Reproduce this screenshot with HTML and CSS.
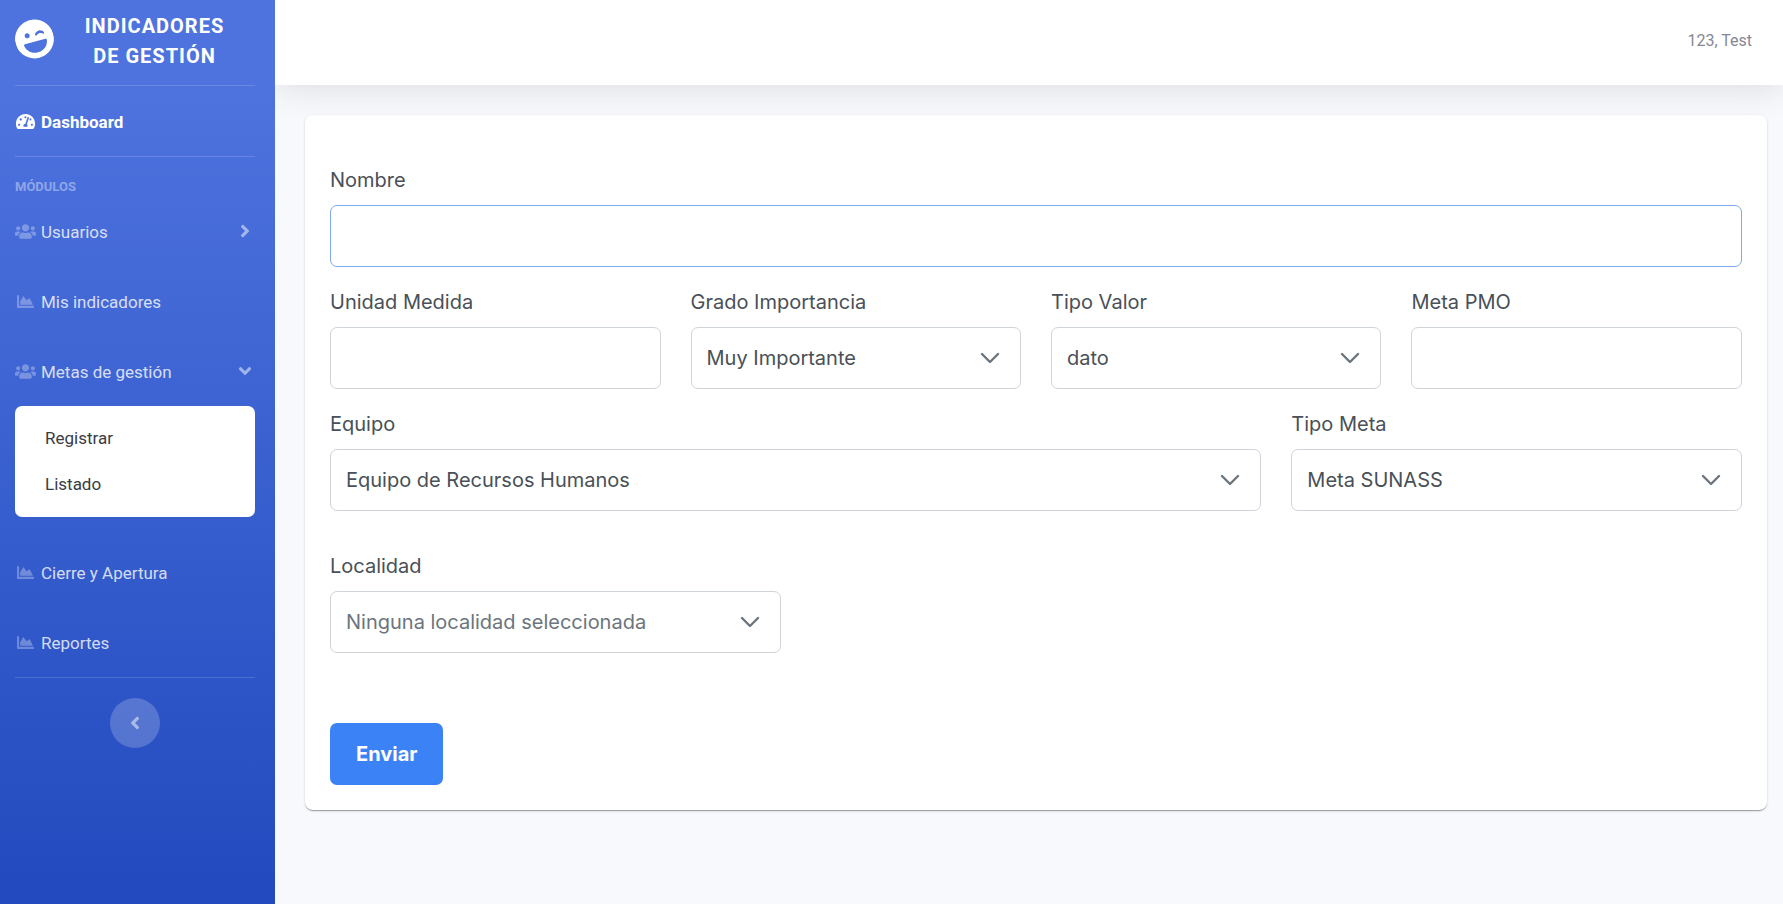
FILE: index.html
```html
<!DOCTYPE html>
<html lang="es">
<head>
<meta charset="utf-8">
<meta name="viewport" content="width=device-width, initial-scale=1">
<title>Indicadores de Gestión</title>
<link rel="stylesheet" href="styles.css">
</head>
<body>
<svg class="sprite" aria-hidden="true">
  <symbol id="laugh-wink" viewBox="0 0 496 512"><path d="M248 8C111 8 0 119 0 256s111 248 248 248 248-111 248-248S385 8 248 8zm20.1 198.1c4-25.2 34.2-42.1 59.9-42.1s55.9 16.9 59.9 42.1c1.7 11.1-11.4 18.3-19.8 10.8l-9.5-8.5c-14.8-13.2-46.2-13.2-61 0L288 217c-8.4 7.4-21.6.3-19.9-10.9zM168 160c17.7 0 32 14.3 32 32s-14.3 32-32 32-32-14.3-32-32 14.3-32 32-32zm230.9 145.9C390 377 329.4 432 256 432h-16c-73.4 0-134-55-142.9-126.1-1.2-9.5 6.3-17.9 15.9-17.9h270c9.6 0 17.1 8.4 15.9 17.9z"/></symbol>
  <symbol id="tachometer" viewBox="0 0 576 512"><path d="M288 32C128.94 32 0 160.94 0 320c0 52.8 14.25 102.26 39.06 144.8 5.61 9.62 16.3 15.2 27.44 15.2h443c11.14 0 21.83-5.58 27.44-15.2C561.75 422.26 576 372.8 576 320c0-159.06-128.94-288-288-288zm0 64c14.71 0 26.58 10.13 30.32 23.65-1.11 2.26-2.64 4.23-3.45 6.67l-9.22 27.67c-5.13 3.49-10.97 6.01-17.64 6.01-17.67 0-32-14.33-32-32S270.33 96 288 96zM96 384c-17.67 0-32-14.33-32-32s14.33-32 32-32 32 14.33 32 32-14.33 32-32 32zm48-160c-17.67 0-32-14.33-32-32s14.33-32 32-32 32 14.33 32 32-14.33 32-32 32zm246.77-72.41l-61.33 184C343.13 347.33 352 364.54 352 384c0 11.72-3.38 22.55-8.88 32H232.88c-5.5-9.45-8.88-20.28-8.88-32 0-33.94 26.5-61.43 59.9-63.59l61.34-184.01c4.17-12.56 17.73-19.45 30.36-15.17 12.57 4.19 19.35 17.79 15.17 30.36zm14.66 57.2l15.52-46.55c3.47-1.29 7.13-2.23 11.05-2.23 17.67 0 32 14.33 32 32s-14.33 32-32 32c-11.38-.01-20.89-6.28-26.57-15.22zM480 384c-17.67 0-32-14.33-32-32s14.33-32 32-32 32 14.33 32 32-14.33 32-32 32z"/></symbol>
  <symbol id="users" viewBox="0 0 640 512"><path d="M96 224c35.3 0 64-28.7 64-64s-28.7-64-64-64-64 28.7-64 64 28.7 64 64 64zm448 0c35.3 0 64-28.7 64-64s-28.7-64-64-64-64 28.7-64 64 28.7 64 64 64zm32 32h-64c-17.6 0-33.5 7.1-45.1 18.6 40.3 22.1 68.9 62 75.1 109.4h66c17.7 0 32-14.3 32-32v-32c0-35.3-28.7-64-64-64zm-256 0c61.9 0 112-50.1 112-112S381.9 32 320 32 208 82.1 208 144s50.1 112 112 112zm76.8 32h-8.3c-20.8 10-43.9 16-68.5 16s-47.6-6-68.5-16h-8.3C179.6 288 128 339.6 128 403.2V432c0 26.5 21.5 48 48 48h288c26.5 0 48-21.5 48-48v-28.8c0-63.6-51.6-115.2-115.2-115.2zm-223.7-13.4C161.5 263.1 145.6 256 128 256H64c-35.3 0-64 28.7-64 64v32c0 17.7 14.3 32 32 32h65.9c6.3-47.4 34.9-87.3 75.2-109.4z"/></symbol>
  <symbol id="chart-area" viewBox="0 0 512 512"><path d="M500 384c6.6 0 12 5.4 12 12v40c0 6.6-5.4 12-12 12H12c-6.6 0-12-5.4-12-12V76c0-6.6 5.4-12 12-12h40c6.6 0 12 5.4 12 12v308h436zM372.7 159.5L288 216l-85.3-113.7c-5.1-6.8-15.5-6.3-19.9 1L96 248v104h384l-89.9-187.8c-3.2-6.5-11.4-8.7-17.4-4.7z"/></symbol>
  <symbol id="angle-right" viewBox="0 0 256 512"><path d="M224.3 273l-136 136c-9.4 9.4-24.6 9.4-33.9 0l-22.6-22.6c-9.4-9.4-9.4-24.6 0-33.9l96.4-96.4-96.4-96.4c-9.4-9.4-9.4-24.6 0-33.9L54.3 103c9.4-9.4 24.6-9.4 33.9 0l136 136c9.5 9.4 9.5 24.6.1 34z"/></symbol>
  <symbol id="angle-left" viewBox="0 0 256 512"><path d="M31.7 239l136-136c9.4-9.4 24.6-9.4 33.9 0l22.6 22.6c9.4 9.4 9.4 24.6 0 33.9L127.9 256l96.4 96.4c9.4 9.4 9.4 24.6 0 33.9L201.7 409c-9.4 9.4-24.6 9.4-33.9 0l-136-136c-9.5-9.4-9.5-24.6-.1-34z"/></symbol>
  <symbol id="angle-down" viewBox="0 0 320 512"><path d="M143 352.3L7 216.3c-9.4-9.4-9.4-24.6 0-33.9l22.6-22.6c9.4-9.4 24.6-9.4 33.9 0l96.4 96.4 96.4-96.4c9.4-9.4 24.6-9.4 33.9 0l22.6 22.6c9.4 9.4 9.4 24.6 0 33.9l-136 136c-9.2 9.4-24.4 9.4-33.8 0z"/></symbol>
  <symbol id="chevron-down" viewBox="0 0 20 20"><path d="M2 6l8 8 8-8" fill="none" stroke="currentColor" stroke-width="2.4" stroke-linecap="round" stroke-linejoin="round"/></symbol>
</svg>

<div class="app">
  <aside class="sidebar">
    <a class="brand" href="#">
      <svg class="brand-icon" aria-hidden="true"><use href="#laugh-wink"/></svg>
      <span class="brand-text">Indicadores de Gestión</span>
    </a>
    <nav class="nav">
      <a class="nav-link active" href="#"><svg class="nav-icon" aria-hidden="true"><use href="#tachometer"/></svg><span class="nav-text">Dashboard</span></a>
      <div class="nav-heading">Módulos</div>
      <a class="nav-link" href="#"><svg class="nav-icon" aria-hidden="true"><use href="#users"/></svg><span class="nav-text">Usuarios</span><svg class="caret" aria-hidden="true"><use href="#angle-right"/></svg></a>
      <a class="nav-link" href="#"><svg class="nav-icon" aria-hidden="true"><use href="#chart-area"/></svg><span class="nav-text">Mis indicadores</span></a>
      <a class="nav-link" href="#"><svg class="nav-icon" aria-hidden="true"><use href="#users"/></svg><span class="nav-text">Metas de gestión</span><svg class="caret" aria-hidden="true"><use href="#angle-down"/></svg></a>
      <div class="submenu">
        <a class="submenu-link" href="#">Registrar</a>
        <a class="submenu-link" href="#">Listado</a>
      </div>
      <a class="nav-link" href="#"><svg class="nav-icon" aria-hidden="true"><use href="#chart-area"/></svg><span class="nav-text">Cierre y Apertura</span></a>
      <a class="nav-link" href="#"><svg class="nav-icon" aria-hidden="true"><use href="#chart-area"/></svg><span class="nav-text">Reportes</span></a>
    </nav>
    <button class="toggle" type="button" aria-label="Contraer menú"><svg class="toggle-icon" aria-hidden="true"><use href="#angle-left"/></svg></button>
  </aside>

  <div class="content">
    <header class="topbar"><a class="user" href="#">123, Test</a></header>
    <main class="main">
      <form class="card">
        <div class="grid">
          <div class="field span-12">
            <label for="nombre">Nombre</label>
            <input class="control focused" id="nombre" type="text">
          </div>
          <div class="field span-3">
            <label for="unidad">Unidad Medida</label>
            <input class="control" id="unidad" type="text">
          </div>
          <div class="field span-3">
            <label for="grado">Grado Importancia</label>
            <div class="select">
              <select class="control" id="grado"><option>Muy Importante</option></select>
              <svg class="chevron" aria-hidden="true"><use href="#chevron-down"/></svg>
            </div>
          </div>
          <div class="field span-3">
            <label for="valor">Tipo Valor</label>
            <div class="select">
              <select class="control" id="valor"><option>dato</option></select>
              <svg class="chevron" aria-hidden="true"><use href="#chevron-down"/></svg>
            </div>
          </div>
          <div class="field span-3">
            <label for="pmo">Meta PMO</label>
            <input class="control" id="pmo" type="text">
          </div>
          <div class="field span-8">
            <label for="equipo">Equipo</label>
            <div class="select">
              <select class="control" id="equipo"><option>Equipo de Recursos Humanos</option></select>
              <svg class="chevron" aria-hidden="true"><use href="#chevron-down"/></svg>
            </div>
          </div>
          <div class="field span-4">
            <label for="meta">Tipo Meta</label>
            <div class="select">
              <select class="control" id="meta"><option>Meta SUNASS</option></select>
              <svg class="chevron" aria-hidden="true"><use href="#chevron-down"/></svg>
            </div>
          </div>
        </div>
        <div class="grid grid-spaced">
          <div class="field span-4">
            <label for="localidad">Localidad</label>
            <div class="select">
              <select class="control placeholder" id="localidad"><option>Ninguna localidad seleccionada</option></select>
              <svg class="chevron" aria-hidden="true"><use href="#chevron-down"/></svg>
            </div>
          </div>
        </div>
        <button class="submit" type="submit">Enviar</button>
      </form>
    </main>
  </div>
</div>
</body>
</html>
```

FILE: styles.css
```css
*,
*::before,
*::after {
  box-sizing: border-box;
}

body {
  margin: 0;
  font-family: Roboto, "Liberation Sans", sans-serif;
  font-size: 20px;
  line-height: 30px;
  background: #f8f9fc;
}

a {
  text-decoration: none;
}

.sprite {
  display: none;
}

svg {
  fill: currentColor;
  flex: none;
}

.app {
  display: flex;
  min-height: 100vh;
}

/* Sidebar */
.sidebar {
  position: relative;
  z-index: 2;
  flex: none;
  display: flex;
  flex-direction: column;
  width: 275px;
  padding: 0 20px 0 15px;
  color: #fff;
  background: linear-gradient(180deg, #4e73df 10%, #224abe 100%);
}

.brand {
  display: flex;
  align-items: center;
  height: 86px;
  padding-bottom: 7px;
  border-bottom: 1px solid rgba(255, 255, 255, 0.15);
  color: #fff;
  font-weight: 700;
  letter-spacing: 1px;
  text-align: center;
  text-transform: uppercase;
}

.brand-icon {
  width: 39px;
  height: 40px;
  transform: rotate(-15deg);
}

.brand-text {
  flex: 1;
  padding: 3px 30px 0;
}

.nav {
  display: flex;
  flex-direction: column;
  border-bottom: 1px solid rgba(255, 255, 255, 0.15);
}

.nav-link {
  display: flex;
  align-items: center;
  gap: 5px;
  height: 70px;
  color: rgba(255, 255, 255, 0.8);
  font-size: 17px;
}

.nav-link.active {
  color: #fff;
  font-weight: 700;
}

.nav-text {
  padding-top: 2px;
}

.nav-icon {
  width: 21px;
  height: 17px;
  color: rgba(255, 255, 255, 0.3);
}

.active .nav-icon {
  color: #fff;
}

.caret {
  width: 20px;
  height: 20px;
  margin-left: auto;
  color: rgba(255, 255, 255, 0.5);
}

.nav-heading {
  height: 40px;
  padding-top: 15px;
  border-top: 1px solid rgba(255, 255, 255, 0.15);
  color: rgba(255, 255, 255, 0.4);
  font-size: 13px;
  font-weight: 700;
  line-height: 30px;
  text-transform: uppercase;
}

.submenu {
  display: flex;
  flex-direction: column;
  margin-bottom: 20px;
  padding: 9px 0 10px;
  border-radius: 7px;
  background: #fff;
}

.submenu-link {
  padding: 8px 30px;
  color: #3a3b45;
  font-size: 17px;
}

.toggle {
  display: grid;
  place-items: center;
  align-self: center;
  width: 50px;
  height: 50px;
  margin: 20px 0;
  padding: 0;
  border: 0;
  border-radius: 50%;
  color: rgba(255, 255, 255, 0.5);
  background: rgba(255, 255, 255, 0.2);
}

.toggle-icon {
  width: 20px;
  height: 20px;
}

/* Content */
.content {
  flex: 1;
  min-width: 0;
}

.topbar {
  position: relative;
  z-index: 1;
  display: flex;
  align-items: center;
  justify-content: flex-end;
  height: 85px;
  padding: 0 31px 4px;
  background: #fff;
  box-shadow: 0 3px 35px rgba(58, 59, 69, 0.15);
}

.user {
  color: #858796;
  font-size: 16px;
}

.main {
  padding: 30px 16px 30px 30px;
}

.card {
  padding: 50px 25px 25px;
  border-radius: 8px;
  background: #fff;
  box-shadow: 0 2px 1px -1px rgba(0, 0, 0, 0.2), 0 1px 1px rgba(0, 0, 0, 0.14), 0 1px 3px rgba(0, 0, 0, 0.12);
  color: #495057;
  font-family: Inter, "Liberation Sans", sans-serif;
}

.grid {
  display: grid;
  grid-template-columns: repeat(12, minmax(0, 1fr));
  gap: 20px 30px;
}

.grid-spaced {
  margin: 40px 0 70px;
}

.span-3 {
  grid-column: span 3;
}

.span-4 {
  grid-column: span 4;
}

.span-8 {
  grid-column: span 8;
}

.span-12 {
  grid-column: span 12;
}

.field {
  display: grid;
  gap: 10px;
}

.control {
  width: 100%;
  height: 62px;
  padding: 0 15px;
  border: 1px solid #ced4da;
  border-radius: 7px;
  outline: 0;
  appearance: none;
  background: #fff;
  color: #495057;
  font: inherit;
}

.control.focused {
  border-color: #80a9ec;
}

.control.placeholder {
  color: #6c757d;
}

.select {
  display: grid;
  align-items: center;
}

.select > * {
  grid-area: 1 / 1;
}

.chevron {
  justify-self: end;
  width: 20px;
  height: 20px;
  margin-right: 21px;
  color: #6c757d;
  pointer-events: none;
}

.submit {
  display: block;
  height: 62px;
  padding: 0 26px;
  border: 0;
  border-radius: 7px;
  background: #3b82f6;
  color: #fff;
  font: inherit;
  font-weight: 700;
}
```
